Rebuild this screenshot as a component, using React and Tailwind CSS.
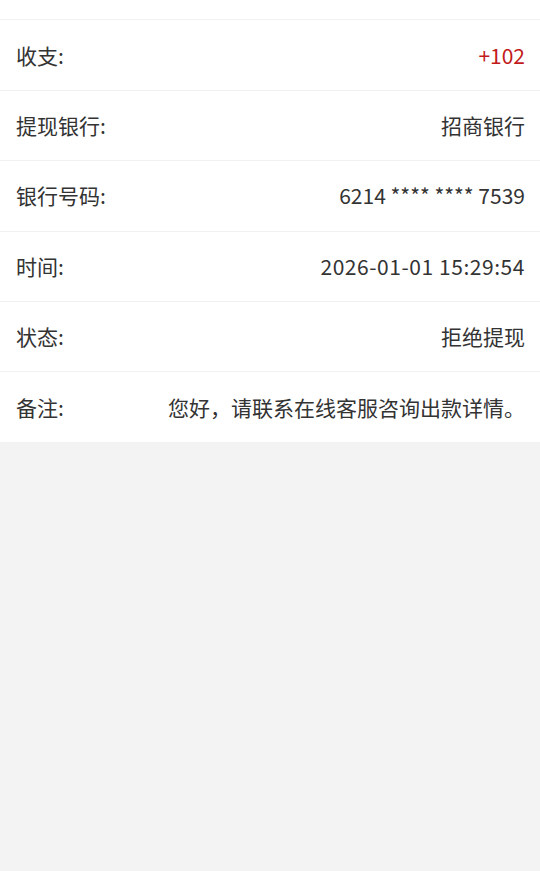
const rows = [
  { label: '收支:', value: '+102', cls: 'text-[#c21a1a]' },
  { label: '提现银行:', value: '招商银行' },
  { label: '银行号码:', value: '6214 **** **** 7539' },
  { label: '时间:', value: '2026-01-01 15:29:54', cls: 'tracking-[0.55px]' },
  { label: '状态:', value: '拒绝提现' },
  { label: '备注:', value: '您好，请联系在线客服咨询出款详情。' },
]

export default function App() {
  return (
    <div
      className="min-h-[871px] bg-[#f3f3f3] text-[#333333]"
      style={{ fontFamily: '"Noto Sans CJK SC", "Noto Sans", sans-serif' }}
    >
      <div className="bg-white">
        <div className="h-[19.4px]" />
        {rows.map((row) => (
          <div
            key={row.label}
            className="h-[70.4px] border-t border-[#f1f1f1] flex items-center justify-between gap-4 pl-4 pr-[15px] text-[21px] leading-none"
          >
            <span className="shrink-0">{row.label}</span>
            <span className={row.cls || ''}>{row.value}</span>
          </div>
        ))}
      </div>
    </div>
  )
}
